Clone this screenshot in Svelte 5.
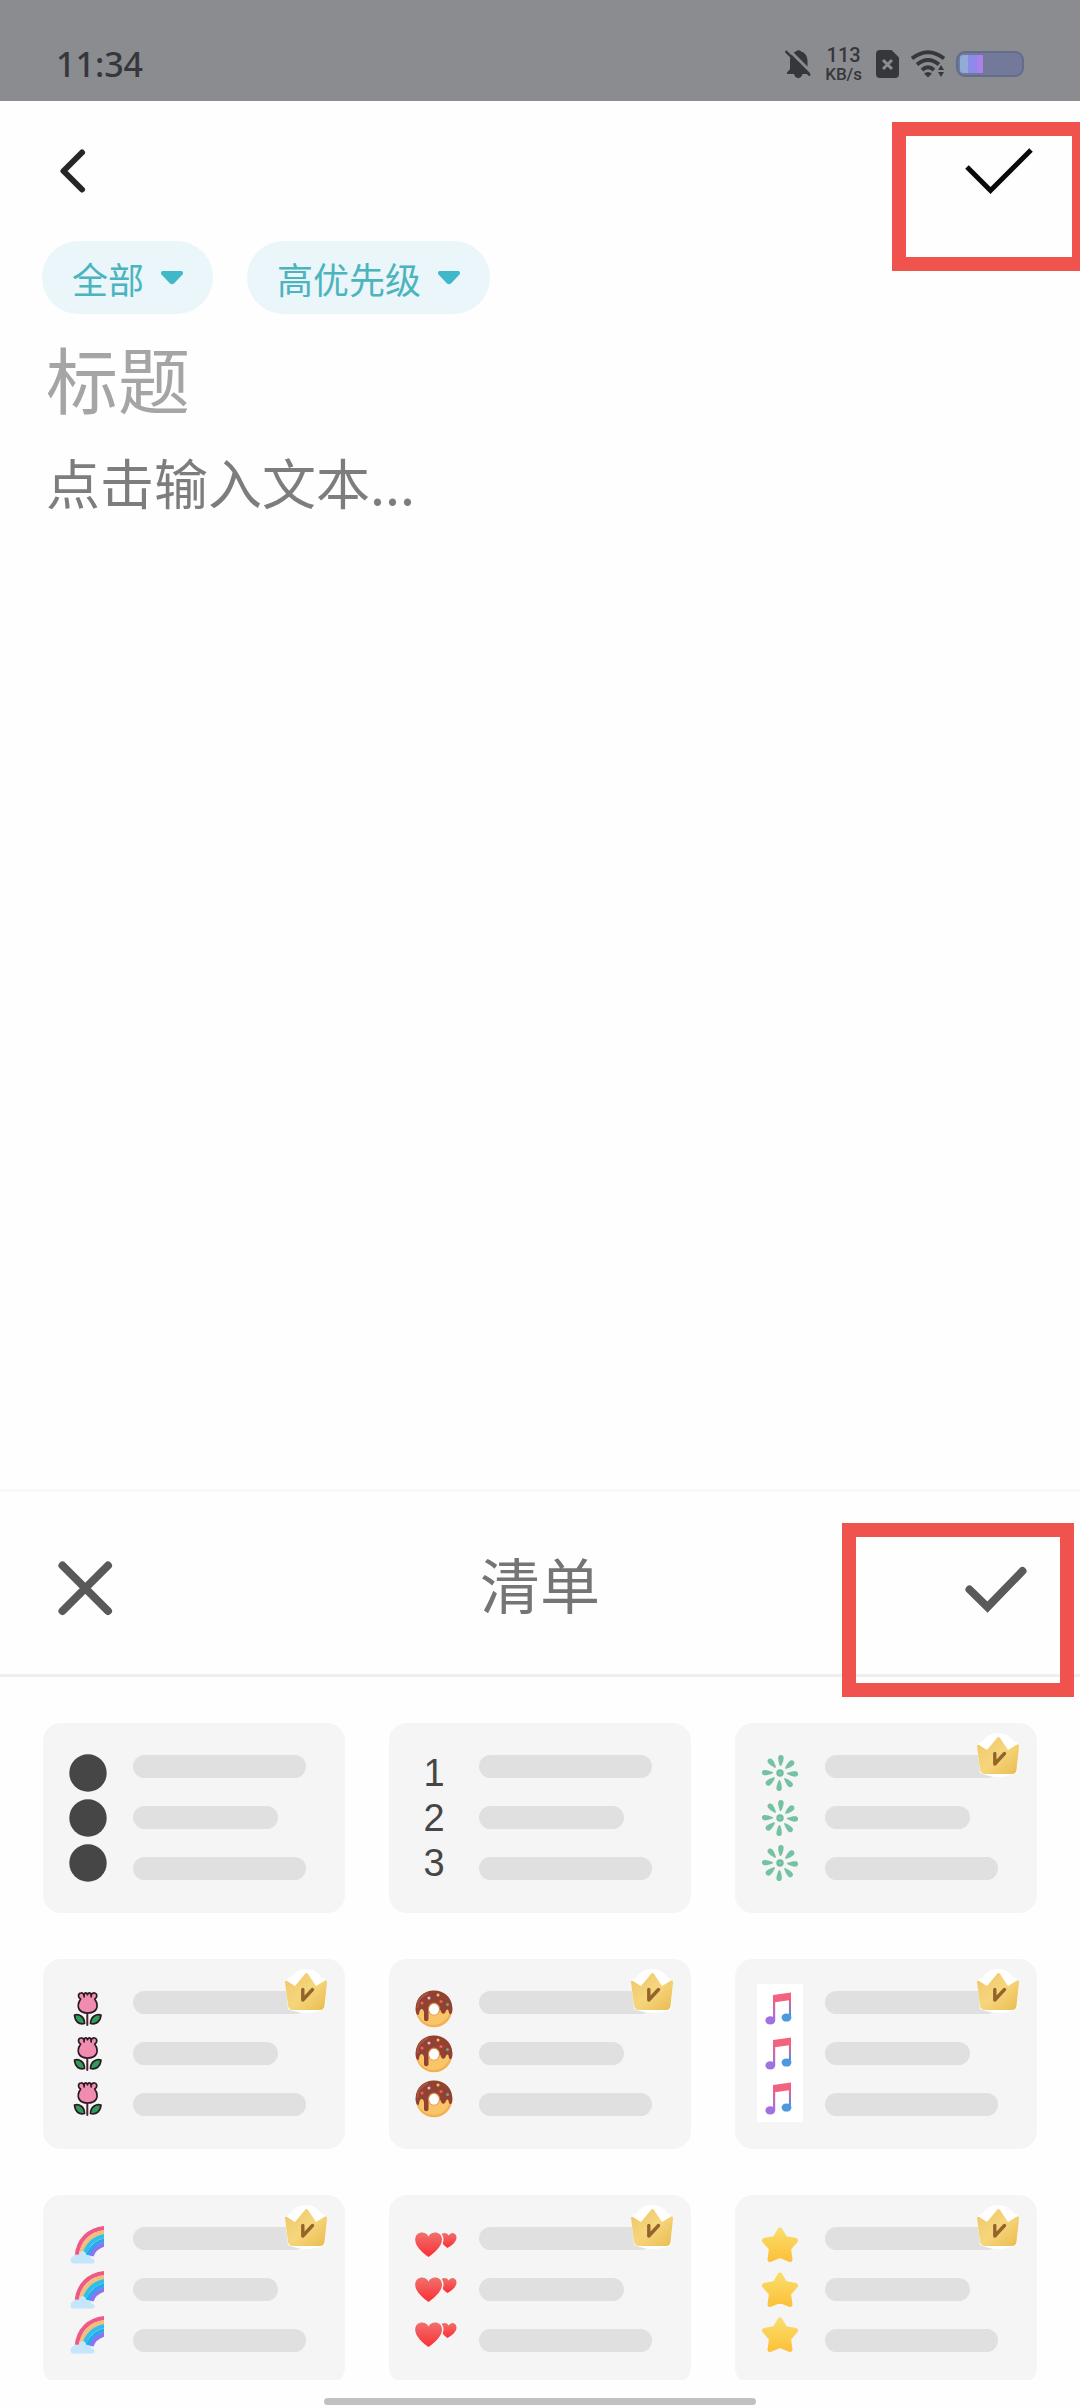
<script>
  const cards = [
    { name: '圆点', kind: 'dot' },
    { name: '数字', kind: 'number' },
    { name: '花火', kind: 'spark', vip: true },
    { name: '郁金香', kind: 'tulip', vip: true },
    { name: '甜甜圈', kind: 'donut', vip: true },
    { name: '音符', kind: 'music', vip: true },
    { name: '彩虹', kind: 'rainbow', vip: true },
    { name: '爱心', kind: 'heart', vip: true },
    { name: '星星', kind: 'star', vip: true }
  ];
  const petals = [4, 50, 94, 139, 184, 230, 272, 321];
  let title = $state('');
  let note = $state('');
</script>

<svg class="defs" aria-hidden="true">
  <defs>
    <linearGradient id="gold" x1="0" y1="0" x2="1" y2="1">
      <stop offset="0" stop-color="#efc468" /><stop offset=".5" stop-color="#f6d67c" /><stop offset="1" stop-color="#eabb50" />
    </linearGradient>
    <linearGradient id="tune" gradientUnits="userSpaceOnUse" x1="0" y1="2" x2="0" y2="35">
      <stop offset="0" stop-color="#f5627c" /><stop offset=".3" stop-color="#ee6088" /><stop offset=".75" stop-color="#a66fdc" /><stop offset="1" stop-color="#9a72e0" />
    </linearGradient>
    <linearGradient id="tune2" gradientUnits="userSpaceOnUse" x1="0" y1="2" x2="0" y2="32">
      <stop offset="0" stop-color="#f5627c" /><stop offset=".3" stop-color="#ee6088" /><stop offset=".75" stop-color="#5790dc" /><stop offset="1" stop-color="#4a9ade" />
    </linearGradient>
    <linearGradient id="love" x1="0" y1="0" x2="0" y2="1">
      <stop offset="0" stop-color="#f0706c" /><stop offset="1" stop-color="#fb2f36" />
    </linearGradient>
    <linearGradient id="sun" x1="0" y1="0" x2="0" y2="1">
      <stop offset="0" stop-color="#f9dc68" /><stop offset="1" stop-color="#fdc23c" />
    </linearGradient>
    <clipPath id="bow"><rect x="0" y="0" width="36" height="40" /></clipPath>
  </defs>
</svg>

{#snippet bullet(kind, n)}
  {#if kind === 'dot'}
    <svg class="glyph" viewBox="0 0 40 40"><circle cx="20" cy="20" r="18.7" fill="#464646" /></svg>
  {:else if kind === 'number'}
    <span class="digit">{n}</span>
  {:else if kind === 'spark'}
    <svg class="glyph" viewBox="0 0 40 40">
      <circle cx="20" cy="20" r="3.700" fill="#6fbf9f" /><circle cx="20" cy="20" r="1.200" fill="#8ccdb1" />
      {#each petals as a}
        <path d="M19.200 12.500C17.600 9 16.900 6 17.200 4C17.900 1.200 21.800 1.200 22.500 4C22.800 6 22.200 9 20.800 12.500C20.400 13.300 19.600 13.300 19.200 12.500Z" fill="#74c2a2" transform="rotate({a} 20 20)" />
      {/each}
    </svg>
  {:else if kind === 'tulip'}
    <svg class="glyph" viewBox="0 0 40 40" stroke="#2b1a22" stroke-width="1.700" stroke-linejoin="round" stroke-linecap="round">
      <path d="M19.300 23V36" stroke="#4a2330" stroke-width="2" />
      <path d="M16.500 34.500C11 36 7 32.500 6.500 26C11.500 24.500 16.500 28 16.500 34.500Z" fill="#2f9c5a" />
      <path d="M22.500 34.500C28 36 32.500 32.500 33 26C28 24.500 22.500 28 22.500 34.500Z" fill="#2f9c5a" />
      <path d="M12.600 10C9.600 8.500 9.900 4.400 12.900 4C14.500 3.700 15.500 4.700 16.100 6C16.500 3.400 18.500 3.100 19.500 5.800C20.500 3.100 22.700 3.300 23.200 6C23.800 4.600 25 3.700 26.600 4C29.500 4.600 29.500 8.500 26.700 10C32 18 28 24 19.600 24C11.200 24 7.500 18 12.600 10Z" fill="#f08cb0" />
      <path d="M16.100 6.200V7.800M23.200 6.200V7.800" fill="none" />
    </svg>
  {:else if kind === 'donut'}
    <svg class="glyph" viewBox="0 0 40 40">
      <circle cx="20" cy="20" r="18.300" fill="#f2b050" /><circle cx="19.500" cy="19" r="17" fill="#fac468" />
      <path d="M1.600 19C2 8.500 10 1.600 20 1.600S38 8.500 38.400 19C38.800 26.500 35 27 34.500 21.500C33.500 19.500 32 21 31.500 23C30 26 27 25 26.500 21H14.500V30C14.500 33 10 33 10 30V23C8.500 18 5.500 20 5 25C4 27.500 1.400 25 1.600 19Z" fill="#914232" />
      <path d="M14 4C6.500 7 3 13 3.500 19" fill="none" stroke="#a95440" stroke-width="2" />
      <ellipse cx="20" cy="20" rx="6" ry="6.500" fill="#d98a45" /><ellipse cx="20" cy="20.300" rx="5" ry="5.500" fill="#fff" />
      <circle cx="15" cy="9" r="1.500" fill="#e6b7d8" /><circle cx="24" cy="6" r="1.500" fill="#f3c35e" /><circle cx="27" cy="12.500" r="1.600" fill="#f0635a" /><circle cx="8" cy="14" r="1.500" fill="#f0635a" /><circle cx="33.500" cy="15.500" r="1.500" fill="#72a67e" />
    </svg>
  {:else if kind === 'music'}
    <svg class="glyph" viewBox="0 0 40 40">
      <path d="M13 6L31 3.500V11L13 13.500Z" fill="#f26380" />
      <path d="M13 7H15.200V31H13Z" fill="url(#tune)" />
      <path d="M28.900 4H31V28H28.900Z" fill="url(#tune2)" />
      <ellipse cx="10.300" cy="31.400" rx="4.900" ry="4.100" fill="#9f72dd" /><ellipse cx="26.500" cy="28.500" rx="4.900" ry="4.100" fill="#4c9add" />
    </svg>
  {:else if kind === 'rainbow'}
    <svg class="glyph" viewBox="0 0 40 40">
      <g clip-path="url(#bow)" fill="none" stroke-width="4.200">
        <path d="M8.800 31C10 16 20 4 38 3" stroke="#ee5a85" />
        <path d="M12.600 31C14 19 23 8 38 6.800" stroke="#f6bd78" />
        <path d="M16.300 31C18 21 26 12 38 10.800" stroke="#2fbfe8" />
        <path d="M20 31C22 24 28 16.500 38 15" stroke="#29a8f0" />
        <path d="M23.500 31C25 26 30 21 38 19" stroke="#8a74f0" />
      </g>
      <path d="M5 38.500C1.500 38.500 1.600 31.500 6 31C7 28.500 9.500 29.500 10.500 30C12 24.500 17 24.500 18.500 30C22 29.500 23.500 31 23 33.500C27.500 33 27.500 38.500 24.500 38.500Z" fill="#c5e6fa" />
    </svg>
  {:else if kind === 'heart'}
    <svg class="glyph" viewBox="0 0 40 40">
      <path d="M33.500 23C29 20 26 16 26 12.500C26 7.500 32.500 6.500 34.800 10.500C36.500 6.500 42.500 7.200 42.500 12.500C42.500 16.500 38.500 20 33.500 23Z" fill="url(#love)" />
      <path d="M14.500 32C8 27.500 1.200 21 1.200 14.800C1.200 6.300 11.500 5.300 14.500 11.600C17.500 5.300 28 6.300 28 14.800C28 21 21 27.500 14.500 32Z" fill="url(#love)" stroke="#f5f5f5" stroke-width="3" paint-order="stroke" />
    </svg>
  {:else}
    <svg class="glyph" viewBox="0 0 40 40">
      <path d="M20 5L25 13.500L35.500 15.500L28.500 23.500L30 34.500L20 30.500L10 34.500L11.500 23.500L4.500 15.500L15 13.500Z" fill="url(#sun)" stroke="url(#sun)" stroke-width="5" stroke-linejoin="round" />
    </svg>
  {/if}
{/snippet}

<main class="screen">
  <header class="status">
    <time>11:34</time>
    <div class="status-icons">
      <svg width="26" height="30" viewBox="0 0 26 30" fill="#36373c">
        <path d="M2 25V23.500L5 20V12C5 6 8.500 3 11 2.400C12 .7 15 .7 16 2.400C20 3.500 22.500 7 22.500 12V20L25 23.500V25H17.500C16.500 30.500 10 30.500 9 25Z" />
        <path d="M2 -1L28 25" stroke="#8b8c90" stroke-width="3" /><path d="M.5 2L25 26.500" stroke="#36373c" stroke-width="2.400" />
      </svg>
      <span class="speed"><span>113</span><span>KB/s</span></span>
      <svg width="24" height="28" viewBox="0 0 24 28">
        <path d="M4 0H15.500L23 7.500V24Q23 28 19 28H4Q0 28 0 24V4Q0 0 4 0Z" fill="#36373c" />
        <path d="M7 10L16 19M16 10L7 19" stroke="#8b8c90" stroke-width="3" />
      </svg>
      <svg width="34" height="28" viewBox="0 0 34 28" fill="none" stroke="#36373c" stroke-width="3.800">
        <path d="M1 8.500Q17 -4 33 8.500" /><path d="M6 14.500Q17 5.500 28 14.500" /><path d="M11 20Q17 14.500 23 20" />
        <path d="M13 23.500Q17 20.500 21 23.500L17 27.500Z" fill="#36373c" stroke="none" />
        <path d="M29.500 13L35 20V28H24V20Z" fill="#8b8c90" stroke="none" />
        <path d="M30 15L33 20H27ZM30 27L27 22H33Z" fill="#36373c" stroke="none" />
      </svg>
      <svg width="68" height="26" viewBox="0 0 68 26">
        <rect x="1" y="1" width="66" height="24" rx="8" fill="#72799a" stroke="#636c8d" stroke-width="2" />
        <path d="M12 4V22H7Q4 22 4 19V7Q4 4 7 4Z" fill="#93a9d6" />
        <path d="M12 4H21V22H12Z" fill="#8f8ae8" /><path d="M21 4H27V22H21Z" fill="#a882e6" />
      </svg>
    </div>
  </header>

  <section class="editor">
    <div class="toolbar">
      <button class="icon-btn" aria-label="返回">
        <svg width="48" height="48" viewBox="0 0 48 48" fill="none" stroke="#262626" stroke-width="6" stroke-linecap="round" stroke-linejoin="round"><path d="M34 5.500L15.500 24L34 42.500" /></svg>
      </button>
      <button class="icon-btn" aria-label="完成">
        <svg width="72" height="48" viewBox="0 0 72 48" fill="none" stroke="#0a0a0a" stroke-width="5"><path d="M3 20L26.500 43.500L67 3" /></svg>
      </button>
      <span class="mark mark-top"></span>
    </div>

    <div class="chips">
      {#each ['全部', '高优先级'] as label}
        <label class="chip">
          <select aria-label={label}><option>{label}</option></select>
          <svg width="24" height="14" viewBox="0 0 24 14"><path d="M2.500 0H21.500Q24 1 22.500 3.500L14 12.500Q12 14 10 12.500L1.500 3.500Q0 1 2.500 0Z" fill="#41b8c8" /></svg>
        </label>
      {/each}
    </div>

    <input class="title" aria-label="标题" placeholder="标题" bind:value={title} />
    <textarea class="note" aria-label="正文" placeholder="点击输入文本..." bind:value={note}></textarea>
  </section>

  <section class="sheet">
    <header class="sheet-head">
      <button class="icon-btn" aria-label="关闭">
        <svg width="60" height="56" viewBox="-4 0 60 56" stroke="#595959" stroke-width="8" stroke-linecap="round"><path d="M5.500 4.500L51 50M51 4.500L5.500 50" /></svg>
      </button>
      <h2>清单</h2>
      <button class="icon-btn" aria-label="确定">
        <svg width="64" height="48" viewBox="0 0 64 48" fill="none" stroke="#5a5a5a" stroke-width="8" stroke-linecap="round"><path d="M6.500 24.500L24.500 42L59.500 6" /></svg>
      </button>
      <span class="mark mark-sheet"></span>
    </header>

    <div class="scroller">
      <div class="grid">
        {#each cards as card}
          <button class="card" aria-label={card.name}>
            <span class="bullets" class:paper={card.kind === 'music'}>
              {#each [1, 2, 3] as n}
                {@render bullet(card.kind, n)}
              {/each}
            </span>
            <span class="lines"><i></i><i class="short"></i><i></i></span>
            {#if card.vip}
              <svg class="crown" width="46" height="44" viewBox="0 0 46 44">
                <path d="M2 12Q5 9 8 8Q13 0 23 0T38 8Q42 9 44 12L42 40Q24 48 5 40Z" fill="#fff" />
                <path d="M2 13Q2 11 4 12L12 17L22 5Q23.500 3 25 5L33 17L42 11.500Q44.500 10.500 44 14L41.500 37Q41 41 37 41H10Q6 41 5 37Z" fill="url(#gold)" />
                <path d="M19.800 20.500V31L29.500 20.500" fill="none" stroke="#94652a" stroke-width="3.400" stroke-linecap="round" stroke-linejoin="round" />
              </svg>
            {/if}
          </button>
        {/each}
      </div>
    </div>
    <footer class="home"><span></span></footer>
  </section>
</main>

<style>
  :global(body) { margin: 0; background: #fefefe; }
  .defs { position: absolute; width: 0; height: 0; }
  .screen {
    display: flex; flex-direction: column; min-height: 100vh; background: #fefefe;
    font-family: "Noto Sans CJK SC", "Noto Sans", sans-serif;
  }
  button, input, textarea, select { font: inherit; border: 0; margin: 0; padding: 0; background: none; }
  svg { display: block; }

  .status {
    box-sizing: border-box; height: 101px; padding: 26px 56px 0; background: #8b8c90; color: #36373c;
    display: flex; align-items: flex-start; justify-content: space-between;
  }
  time { font: 500 34px/76px "Noto Sans", sans-serif; }
  .status-icons { display: flex; align-items: center; gap: 11px; height: 76px; }
  .speed { display: flex; flex-direction: column; align-items: center; margin: 0 3px; font-family: Roboto, sans-serif; font-weight: 500; }
  .speed span { font-size: 20px; line-height: 20px; }
  .speed span + span { font-size: 17px; line-height: 18px; }

  .editor { flex: 1; display: flex; flex-direction: column; }
  .toolbar { position: relative; display: flex; justify-content: space-between; height: 94px; padding: 46px 44px 0 48px; }
  .icon-btn { display: flex; align-items: center; justify-content: center; align-self: flex-start; cursor: pointer; }
  .mark { position: absolute; box-sizing: border-box; border: 14px solid #f0524d; pointer-events: none; }
  .mark-top { top: 21px; right: 0; width: 188px; height: 149px; border-right-width: 8px; }

  .chips { display: flex; gap: 34px; padding: 0 42px; }
  .chip { display: grid; align-items: center; height: 73px; border-radius: 37px; background: #eaf6f9; }
  .chip > * { grid-area: 1 / 1; }
  .chip select { appearance: none; height: 73px; padding: 0 68px 0 30px; font-size: 36px; line-height: 52px; color: #4bb4bf; border-radius: 37px; outline-offset: 2px; }
  .chip svg { justify-self: end; margin-right: 29px; pointer-events: none; }

  .title { height: 92px; margin: 17px 46px 0; font-size: 72px; line-height: 92px; color: #333; }
  .note { flex: 1; margin: 23px 46px 0; font-size: 54px; line-height: 72px; color: #333; resize: none; }
  .title::placeholder { color: #a5a5a5; opacity: 1; }
  .note::placeholder { color: #7d7d7d; opacity: 1; }

  .sheet { border-top: 3px solid #f8f8f8; }
  .sheet-head {
    position: relative; display: grid; grid-template-columns: 1fr auto 1fr; align-items: center;
    height: 182px; padding: 0 53px; border-bottom: 3px solid #efefef;
  }
  .sheet-head .icon-btn { align-self: center; justify-self: start; margin-top: 12px; }
  .sheet-head .icon-btn:nth-of-type(2) { justify-self: end; }
  h2 { margin: 0; font-size: 60px; line-height: 88px; font-weight: 400; color: #757575; }
  .mark-sheet { top: 31px; right: 6px; width: 232px; height: 174px; z-index: 1; }

  .scroller { height: 703px; overflow: hidden; }
  .grid { display: grid; grid-template-columns: repeat(3, 1fr); gap: 46px 44px; padding: 46px 43px; }
  .card {
    position: relative; display: flex; align-items: flex-start; gap: 25px; height: 190px;
    padding: 0 39px 0 25px; border-radius: 18px; background: #f5f5f5; cursor: pointer;
  }
  .bullets { display: flex; flex: none; flex-direction: column; align-items: center; gap: 5px; width: 40px; padding-top: 30px; }
  .paper { margin: 25px -3px 0; padding: 5px 3px 3px; background: #fff; }
  .glyph { width: 40px; height: 40px; overflow: visible; }
  .digit { height: 40px; font: 38px/40px "Liberation Sans", sans-serif; color: #464646; }
  .lines { display: flex; flex: 1; flex-direction: column; gap: 28px; padding-top: 32px; }
  .lines i { height: 23px; border-radius: 12px; background: #e0e0e0; }
  .lines .short { width: 84%; }
  .crown { position: absolute; top: 10px; right: 16px; }

  .home { display: flex; justify-content: center; height: 10px; padding-top: 18px; }
  .home span { width: 40%; height: 7px; border-radius: 4px; background: #c1c1c1; }
</style>
